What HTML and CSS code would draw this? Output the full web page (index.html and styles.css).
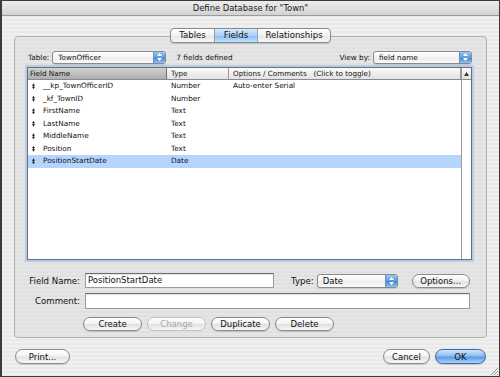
FILE: index.html
```html
<!DOCTYPE html>
<html lang="en">
  <head>
    <title>Define Database</title>
    <meta charset="utf-8">
    <link rel="stylesheet" href="styles.css">
  </head>
  <body>
    <div class="window">
      <div class="titlebar">Define Database for "Town"</div>

      <div class="body">
        <div class="tabs">
          <span class="tab tab-tables">Tables</span><span class="tab tab-fields active">Fields</span><span class="tab tab-rel">Relationships</span>
        </div>

        <div class="panel">
          <!-- Table chooser -->
          <div class="toolbar">
            <span class="label">Table:</span>
            <div class="popup popup-table">
              <span class="popup-text">TownOfficer</span>
              <span class="cap"><svg width="5" height="8" viewBox="0 0 5 8"><path d="M2.5 0 L5 3 L0 3 Z M0 5 L5 5 L2.5 8 Z" fill="#fff"/></svg></span>
            </div>
            <span class="count">7 fields defined</span>
            <span class="spacer"></span>
            <span class="label">View by:</span>
            <div class="popup popup-view">
              <span class="popup-text">field name</span>
              <span class="cap"><svg width="5" height="8" viewBox="0 0 5 8"><path d="M2.5 0 L5 3 L0 3 Z M0 5 L5 5 L2.5 8 Z" fill="#fff"/></svg></span>
            </div>
          </div>

          <!-- Field list -->
          <div class="list">
            <div class="grid">
              <div class="head">
                <div class="hcell sorted">Field Name</div>
                <div class="hcell">Type</div>
                <div class="hcell">Options / Comments &nbsp; (Click to toggle)</div>
              </div>
              <div class="row">
                <div class="cell name"><span class="handle"></span>__kp_TownOfficerID</div>
                <div class="cell">Number</div>
                <div class="cell">Auto-enter Serial</div>
              </div>
              <div class="row">
                <div class="cell name"><span class="handle"></span>_kf_TownID</div>
                <div class="cell">Number</div>
                <div class="cell"></div>
              </div>
              <div class="row">
                <div class="cell name"><span class="handle"></span>FirstName</div>
                <div class="cell">Text</div>
                <div class="cell"></div>
              </div>
              <div class="row">
                <div class="cell name"><span class="handle"></span>LastName</div>
                <div class="cell">Text</div>
                <div class="cell"></div>
              </div>
              <div class="row">
                <div class="cell name"><span class="handle"></span>MiddleName</div>
                <div class="cell">Text</div>
                <div class="cell"></div>
              </div>
              <div class="row">
                <div class="cell name"><span class="handle"></span>Position</div>
                <div class="cell">Text</div>
                <div class="cell"></div>
              </div>
              <div class="row selected">
                <div class="cell name"><span class="handle"></span>PositionStartDate</div>
                <div class="cell">Date</div>
                <div class="cell"></div>
              </div>
            </div>
            <div class="track">
              <div class="track-head"><svg width="5" height="4" viewBox="0 0 5 4"><path d="M2.5 0 L5 4 L0 4 Z" fill="#333"/></svg></div>
            </div>
          </div>

          <!-- Field editor -->
          <div class="form">
            <div class="form-row">
              <span class="flabel">Field Name:</span>
              <div class="input input-name">PositionStartDate</div>
              <span class="type-label">Type:</span>
              <div class="popup popup-type">
                <span class="popup-text">Date</span>
                <span class="cap"><svg width="5" height="8" viewBox="0 0 5 8"><path d="M2.5 0 L5 3 L0 3 Z M0 5 L5 5 L2.5 8 Z" fill="#fff"/></svg></span>
              </div>
              <button class="btn btn-options">Options...</button>
            </div>
            <div class="form-row">
              <span class="flabel">Comment:</span>
              <div class="input input-comment"></div>
            </div>
            <div class="actions">
              <button class="btn">Create</button>
              <button class="btn disabled">Change</button>
              <button class="btn">Duplicate</button>
              <button class="btn">Delete</button>
            </div>
          </div>
        </div>

        <div class="footer">
          <button class="btn btn-print">Print...</button>
          <span class="spacer"></span>
          <button class="btn btn-cancel">Cancel</button>
          <button class="btn btn-ok">OK</button>
        </div>
      </div>

      <svg class="grip" width="10" height="10" viewBox="0 0 10 10">
        <path d="M9 2 L2 9 M9 5 L5 9 M9 8 L8 9" stroke="#9a9a9a" stroke-width="1"/>
      </svg>
    </div>
  </body>
</html>
```

FILE: styles.css
```css
* {
  margin: 0;
  padding: 0;
  box-sizing: border-box;
}

:root {
  --stripe-light: #f0f0f0;
  --stripe-dark: #e9e9e9;
  --panel-light: #e6e6e6;
  --panel-dark: #e0e0e0;
  --border: #8e8e8e;
  --select: #b5d5ff;
  --text: #111;
}

body {
  font-family: "DejaVu Sans", Verdana, sans-serif;
  color: var(--text);
  background: #fff;
}

.window {
  position: relative;
  width: 500px;
  height: 377px;
  border: 1px solid #3c3c3c;
  border-left-width: 2px;
  background: repeating-linear-gradient(180deg, var(--stripe-light) 0 2px, var(--stripe-dark) 2px 4px);
  overflow: hidden;
}

.titlebar {
  height: 15px;
  line-height: 14px;
  text-align: center;
  font-size: 8.4px;
  color: #1a1a1a;
  background: linear-gradient(180deg, #ececec 0%, #dedede 60%, #d2d2d2 100%);
  border-bottom: 1px solid #9a9a9a;
}

.body {
  padding-top: 12px;
}

/* Tabs */
.tabs {
  position: relative;
  z-index: 1;
  display: flex;
  width: 161px;
  height: 15px;
  margin: 0 auto -7px;
  margin-left: 168px;
  border: 1px solid #8a8a8a;
  border-radius: 4px;
  overflow: hidden;
  background: linear-gradient(180deg, #ffffff 0%, #f1f1f1 50%, #e6e6e6 51%, #f6f6f6 100%);
  box-shadow: 0 1px 1px rgba(0, 0, 0, 0.15);
}

.tab {
  font-size: 8.6px;
  line-height: 13px;
  text-align: center;
  color: #111;
}

.tab-tables {
  width: 44px;
  border-right: 1px solid #9a9a9a;
}

.tab-fields {
  width: 43px;
  border-right: 1px solid #8aa6c8;
}

.tab-rel {
  flex: 1;
}

.tab.active {
  background: linear-gradient(180deg, #d6eafd 0%, #a9cff5 50%, #8dbbee 51%, #bfe0fb 100%);
}

/* Panel */
.panel {
  margin: 0 12px 0 12px;
  padding: 13px 14px 6px 12px;
  border: 1px solid #b0b0b0;
  border-radius: 4px;
  background: repeating-linear-gradient(180deg, var(--panel-light) 0 2px, var(--panel-dark) 2px 4px);
}

.toolbar {
  display: flex;
  align-items: center;
  height: 14px;
  padding-left: 1px;
  font-size: 7.3px;
}

.label {
  margin-right: 3px;
}

.count {
  margin-left: 10px;
}

.spacer {
  flex: 1;
}

.popup {
  display: flex;
  align-items: stretch;
  height: 13px;
  border: 1px solid #8a8a8a;
  border-radius: 3px;
  background: linear-gradient(180deg, #ffffff 0%, #f4f4f4 50%, #ebebeb 51%, #fafafa 100%);
  box-shadow: 0 1px 1px rgba(0, 0, 0, 0.12);
  overflow: hidden;
}

.popup-text {
  flex: 1;
  padding-left: 5px;
  line-height: 11px;
  font-size: 7.3px;
}

.cap {
  display: flex;
  align-items: center;
  justify-content: center;
  width: 12px;
  border-left: 1px solid #6d8fbd;
  background: linear-gradient(180deg, #9cc6f3 0%, #5b9ae3 50%, #3d82d8 51%, #8cc4f7 100%);
}

.popup-table {
  width: 114px;
}

.popup-view {
  width: 99px;
}

/* List */
.list {
  display: flex;
  height: 193px;
  margin-top: 3px;
  border: 1px solid #6f6f6f;
  background: #fff;
  box-shadow: 0 0 0 2px #b6cce8;
}

.grid {
  flex: 1;
}

.head,
.row {
  display: grid;
  grid-template-columns: 139px 62px 1fr;
}

.head {
  height: 12px;
  border-bottom: 1px solid #8a8a8a;
}

.hcell {
  font-size: 7.2px;
  line-height: 11px;
  padding-left: 4px;
  border-right: 1px solid #9a9a9a;
  background: linear-gradient(180deg, #fbfbfb 0%, #ececec 60%, #e2e2e2 100%);
}

.hcell.sorted {
  padding-left: 2px;
  background: linear-gradient(180deg, #d2d2d2 0%, #bcbcbc 60%, #afafaf 100%);
  border-right-color: #6f6f6f;
}

.row {
  height: 12.5px;
}

.row.selected {
  background: var(--select);
}

.cell {
  font-size: 7.3px;
  line-height: 12.5px;
  padding-left: 4px;
  white-space: nowrap;
}

.cell.name {
  display: flex;
  align-items: center;
  padding-left: 4px;
}

.handle {
  width: 3px;
  height: 6px;
  margin-right: 8px;
  background: #1a1a1a;
  clip-path: polygon(50% 0, 100% 40%, 60% 40%, 60% 60%, 100% 60%, 50% 100%, 0 60%, 40% 60%, 40% 40%, 0 40%);
}

.track {
  width: 10px;
  border-left: 1px solid #9a9a9a;
  background: #fff;
}

.track-head {
  display: flex;
  align-items: center;
  justify-content: center;
  height: 12px;
  border-bottom: 1px solid #8a8a8a;
  background: linear-gradient(180deg, #fbfbfb 0%, #ececec 60%, #e2e2e2 100%);
}

/* Field editor */
.form {
  margin-top: 13px;
}

.form-row {
  display: flex;
  align-items: center;
  margin-bottom: 5px;
}

.flabel {
  width: 53px;
  text-align: right;
  font-size: 8.6px;
  margin-right: 5px;
  white-space: nowrap;
}

.input {
  height: 16px;
  border: 1px solid #9a9a9a;
  border-top-color: #6f6f6f;
  background: #fff;
  font-size: 8.5px;
  line-height: 14px;
  padding-left: 2px;
  box-shadow: inset 0 1px 1px rgba(0, 0, 0, 0.12);
}

.input-name {
  width: 189px;
  height: 15px;
  line-height: 13px;
}

.input-comment {
  width: 385px;
}

.type-label {
  margin-left: 17px;
  margin-right: 3px;
  font-size: 8.6px;
}

.popup-type {
  width: 81px;
  height: 14px;
}

.popup-type .popup-text {
  font-size: 8.5px;
  line-height: 12px;
}

.actions {
  display: flex;
  gap: 5px;
  margin-top: 8px;
  margin-left: 56px;
}

/* Buttons */
.btn {
  font-family: inherit;
  font-size: 8.5px;
  color: #111;
  width: 59px;
  height: 14px;
  line-height: 12px;
  border: 1px solid #8a8a8a;
  border-radius: 8px;
  background: linear-gradient(180deg, #ffffff 0%, #f3f3f3 45%, #e2e2e2 55%, #f7f7f7 100%);
  box-shadow: 0 1px 1px rgba(0, 0, 0, 0.15);
}

.btn.disabled {
  color: #a8a8a8;
  border-color: #c2c2c2;
  box-shadow: none;
}

.btn-options {
  width: 58px;
  margin-left: 14px;
}

.footer {
  display: flex;
  align-items: center;
  margin-top: 11px;
  padding: 0 13px 0 13px;
}

.btn-print {
  width: 55px;
  height: 15px;
}

.btn-cancel {
  width: 47px;
  height: 15px;
  margin-right: 5px;
}

.btn-ok {
  width: 51px;
  height: 15px;
  border-color: #3d64a6;
  background: linear-gradient(180deg, #d2e6fc 0%, #8ebcf0 45%, #5d9be4 55%, #a9d3fb 100%);
}

.grip {
  position: absolute;
  right: 0;
  bottom: 0;
}
```
